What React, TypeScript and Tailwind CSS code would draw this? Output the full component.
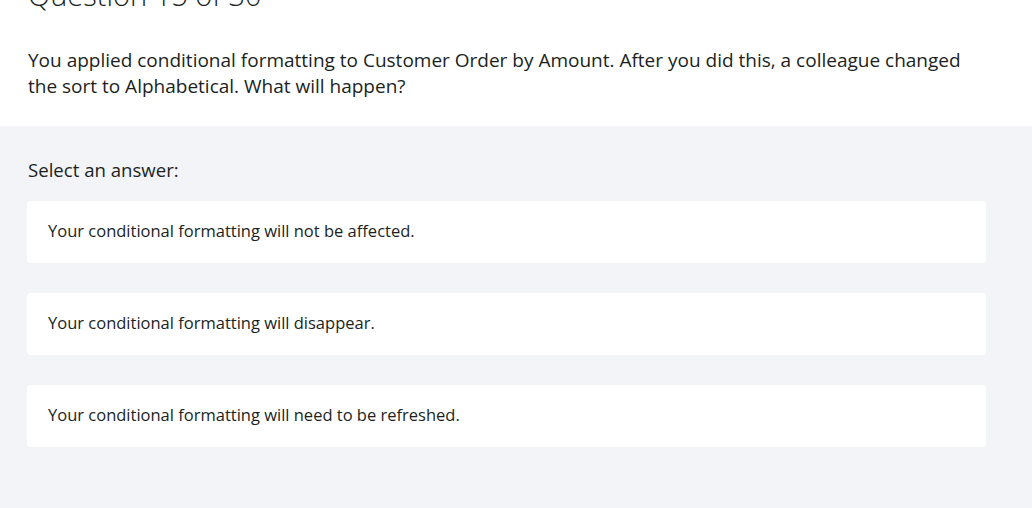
const answers = [
  'Your conditional formatting will not be affected.',
  'Your conditional formatting will disappear.',
  'Your conditional formatting will need to be refreshed.',
];

export default function App() {
  return (
    <div
      className="w-[1032px] h-[508px] overflow-hidden bg-[#f2f4f7] text-[#201f1e]"
      style={{ fontFamily: '"Open Sans", "Noto Sans", Arial, sans-serif' }}
    >
      <div className="bg-white px-[28px] pb-[27px] -mt-[25px]">
        <h1 className="text-[29px] leading-[40px] font-light">Question 15 of 30</h1>
        <p className="mt-[32px] text-[19px] leading-[26px] max-w-[958px]">
          You applied conditional formatting to Customer Order by Amount. After you did this, a
          colleague changed the sort to Alphabetical. What will happen?
        </p>
      </div>
      <div className="px-[27px] pt-[32px]">
        <div className="text-[18.6px] leading-[24px] pl-[1px]">Select an answer:</div>
        <div className="mt-[19px] flex flex-col gap-[30.5px] w-[959px]">
          {answers.map((a) => (
            <div
              key={a}
              className="bg-white rounded-[4px] h-[61.5px] flex items-center px-[21px] text-[16.5px]"
            >
              {a}
            </div>
          ))}
        </div>
      </div>
    </div>
  );
}
